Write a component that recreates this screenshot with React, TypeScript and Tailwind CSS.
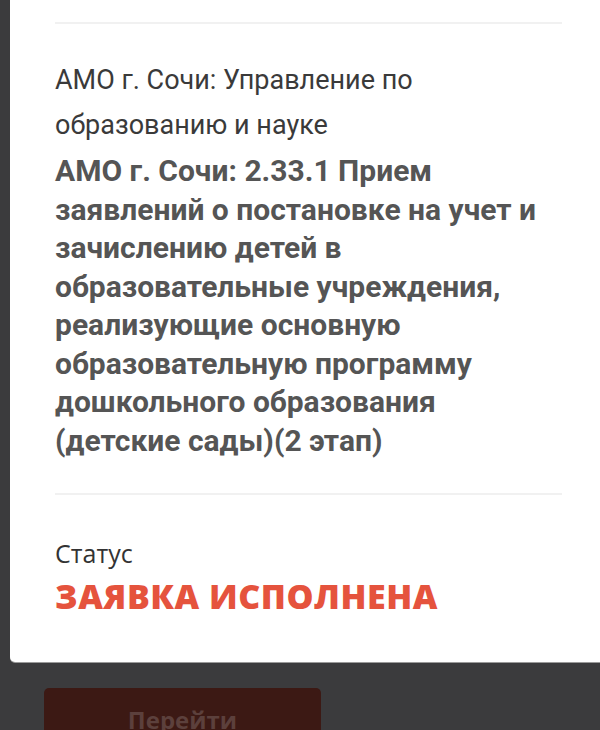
export default function App() {
  return (
    <div className="w-[600px] h-[730px] overflow-hidden bg-[#3b3b3d] flex flex-col">
      {/* Card */}
      <div className="ml-[10px] bg-white rounded-bl-[5px] pt-[22px] pb-[46px] pl-[45px] pr-[38px] shadow-[0_1px_0_#9a9a9a]">
        <div className="h-[2px] bg-[#f1f1f1]" />

        <p className="mt-[34px] text-[27px] leading-[45px] text-[#3a3a3a] font-['Roboto',sans-serif]">
          АМО г. Сочи: Управление по образованию и науке
        </p>
        <h2 className="mt-[4px] max-w-[500px] text-[30px] leading-[38.5px] font-bold text-[#555555] font-['Roboto',sans-serif]">
          АМО г. Сочи: 2.33.1 Прием заявлений о постановке на учет и зачислению детей в образовательные учреждения,
          реализующие основную образовательную программу дошкольного образования (детские сады)(2 этап)
        </h2>

        <div className="mt-[33px] h-[2px] bg-[#f1f1f1]" />

        <p className="mt-[42px] text-[25px] leading-[32px] text-[#333333] font-['Open_Sans',sans-serif]">Статус</p>
        <p className="mt-[7px] text-[34px] leading-[40px] tracking-[0.5px] font-extrabold text-[#e5533d] font-['Open_Sans',sans-serif]">
          ЗАЯВКА ИСПОЛНЕНА
        </p>
      </div>

      {/* Button behind overlay */}
      <div className="mt-[26px] ml-[44px] w-[277px] h-[64px] shrink-0 rounded-[5px] bg-[#3c1914] flex items-center justify-center">
        <span className="text-[24px] font-bold text-[#5c403c] font-['Open_Sans',sans-serif]">Перейти</span>
      </div>
    </div>
  );
}
